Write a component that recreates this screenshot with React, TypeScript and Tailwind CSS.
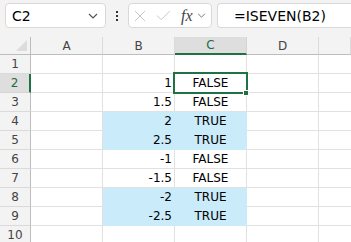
import React from "react";

const cols = ["A", "B", "C", "D", ""];

const data: Record<number, { b?: string; c?: string; fill?: boolean }> = {
  2: { b: "1", c: "FALSE" },
  3: { b: "1.5", c: "FALSE" },
  4: { b: "2", c: "TRUE", fill: true },
  5: { b: "2.5", c: "TRUE", fill: true },
  6: { b: "-1", c: "FALSE" },
  7: { b: "-1.5", c: "FALSE" },
  8: { b: "-2", c: "TRUE", fill: true },
  9: { b: "-2.5", c: "TRUE", fill: true },
};

const Chevron = ({ className }: { className?: string }) => (
  <svg viewBox="0 0 10 6" className={className} fill="none" stroke="currentColor" strokeWidth="1.2">
    <path d="M1 1 L5 5 L9 1" />
  </svg>
);

const Toolbar = () => (
  <div className="flex h-[37px] items-start pt-[3px] pl-[5px]">
    <div className="flex h-[25px] w-[101px] items-center justify-between rounded-[4px] border border-[#d9d9d9] bg-white pl-[6px] pr-[7px]">
      <span className="text-[14px] leading-none text-black">C2</span>
      <Chevron className="h-[6px] w-[10px] text-[#555]" />
    </div>
    <div className="flex h-[25px] w-[22px] flex-col items-center justify-center gap-[2px]">
      <span className="h-[2px] w-[2px] bg-[#333]" />
      <span className="h-[2px] w-[2px] bg-[#333]" />
      <span className="h-[2px] w-[2px] bg-[#333]" />
    </div>
    <div className="flex h-[25px] w-[84px] items-center rounded-[4px] border border-[#d9d9d9] bg-white pl-[5px]">
      <svg viewBox="0 0 12 12" className="h-[12px] w-[12px] text-[#c6c6c6]" fill="none" stroke="currentColor" strokeWidth="1">
        <path d="M1 1 L11 11 M11 1 L1 11" />
      </svg>
      <svg viewBox="0 0 16 12" className="ml-[10px] h-[11px] w-[15px] text-[#c6c6c6]" fill="none" stroke="currentColor" strokeWidth="1">
        <path d="M1 6 L5.5 10.5 L15 1" />
      </svg>
      <span
        className="ml-[10px] text-[16px] italic leading-none text-[#444]"
        style={{ fontFamily: '"Liberation Serif", serif' }}
      >
        fx
      </span>
      <Chevron className="ml-[4px] h-[5px] w-[9px] text-[#777]" />
    </div>
    <div className="ml-[5px] flex h-[25px] flex-1 items-center rounded-l-[4px] border border-r-0 border-[#d9d9d9] bg-white pl-[16px]">
      <span className="text-[14px] leading-none text-black">=ISEVEN(B2)</span>
    </div>
  </div>
);

const Grid = () => {
  const rows = Array.from({ length: 10 }, (_, i) => i + 1);
  return (
    <div className="relative grid grid-cols-[31px_72px_72px_72px_72px_1fr] grid-rows-[18px_repeat(10,19px)] text-[12px]">
      <div className="relative border-b border-r border-[#bdbdbd] bg-[#f3f3f3]">
        <span
          className="absolute bottom-[3px] right-[3px] h-0 w-0"
          style={{ borderBottom: "11px solid #dcdcdc", borderLeft: "11px solid transparent" }}
        />
      </div>
      {cols.map((c, i) => (
        <div
          key={i}
          className={`flex items-center justify-center border-r ${
            c === "C"
              ? "border-b-2 border-r-[#d4d4d4] border-b-[#1f7244] bg-[#dedede] text-[#1f6b3f]"
              : "border-b border-r-[#dadada] border-b-[#bdbdbd] bg-[#f3f3f3] text-[#444]"
          }`}
        >
          {c}
        </div>
      ))}
      {rows.map((r) => {
        const row = data[r] || {};
        return (
          <React.Fragment key={r}>
            <div
              className={`flex items-center justify-center border-b ${
                r === 2
                  ? "border-r-2 border-r-[#1f7244] border-b-[#d4d4d4] bg-[#dedede] text-[#1f6b3f]"
                  : "border-r border-r-[#bdbdbd] border-b-[#dadada] bg-[#f3f3f3] text-[#444]"
              }`}
            >
              {r}
            </div>
            <div className="border-b border-r border-[#e1e1e1] bg-white" />
            <div
              className={`flex items-center justify-end border-b border-r pr-[2px] text-black ${
                row.fill ? "border-[#c9ebfa] bg-[#c9ebfa]" : "border-[#e1e1e1] bg-white"
              }`}
            >
              {row.b}
            </div>
            <div
              className={`flex items-center justify-center border-b border-r text-black ${
                row.fill ? "border-[#c9ebfa] bg-[#c9ebfa]" : "border-[#e1e1e1] bg-white"
              }`}
            >
              {row.c}
            </div>
            <div className="border-b border-r border-[#e1e1e1] bg-white" />
            <div className="border-b border-[#e1e1e1] bg-white" />
          </React.Fragment>
        );
      })}
      <div className="pointer-events-none absolute left-[173px] top-[35px] h-[22px] w-[75px] border-2 border-[#1f7244]" />
      <div className="pointer-events-none absolute left-[243px] top-[53px] h-[6px] w-[6px] border border-white bg-[#1f7244]" />
    </div>
  );
};

export default function App() {
  return (
    <div
      className="h-[242px] w-[351px] overflow-hidden bg-[#f3f3f3]"
      style={{ fontFamily: '"DejaVu Sans", "Noto Sans", sans-serif' }}
    >
      <Toolbar />
      <Grid />
    </div>
  );
}
